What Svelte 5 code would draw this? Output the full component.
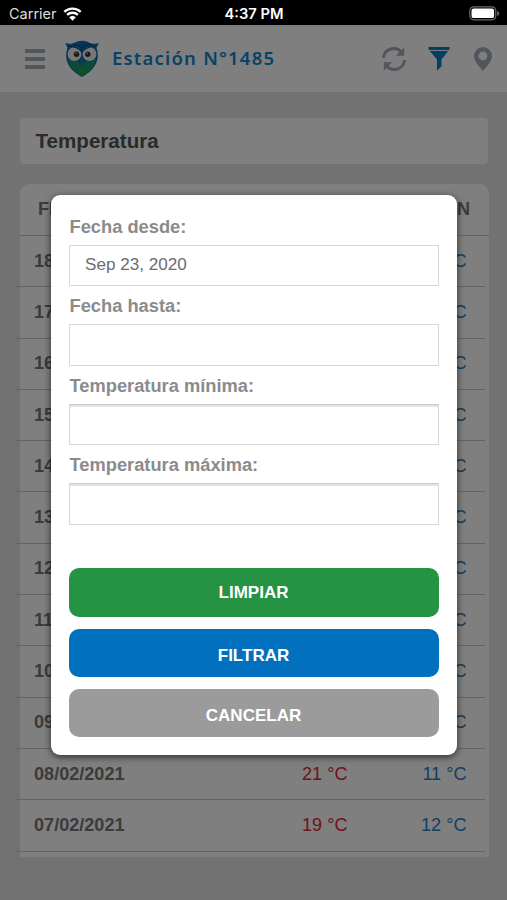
<script lang="ts">
  interface Reading {
    date: string;
    max: number;
    min: number;
  }

  interface Field {
    id: string;
    label: string;
    value: string;
    numeric?: boolean;
  }

  const readings: Reading[] = [
    { date: '18/02/2021', max: 22, min: 12 },
    { date: '17/02/2021', max: 23, min: 12 },
    { date: '16/02/2021', max: 21, min: 11 },
    { date: '15/02/2021', max: 20, min: 10 },
    { date: '14/02/2021', max: 22, min: 11 },
    { date: '13/02/2021', max: 21, min: 12 },
    { date: '12/02/2021', max: 19, min: 10 },
    { date: '11/02/2021', max: 20, min: 11 },
    { date: '10/02/2021', max: 22, min: 12 },
    { date: '09/02/2021', max: 21, min: 11 },
    { date: '08/02/2021', max: 21, min: 11 },
    { date: '07/02/2021', max: 19, min: 12 }
  ];

  let fields: Field[] = $state([
    { id: 'desde', label: 'Fecha desde:', value: 'Sep 23, 2020' },
    { id: 'hasta', label: 'Fecha hasta:', value: '' },
    { id: 'minima', label: 'Temperatura mínima:', value: '', numeric: true },
    { id: 'maxima', label: 'Temperatura máxima:', value: '', numeric: true }
  ]);

  function clear() {
    for (const f of fields) f.value = '';
  }
</script>

<div class="screen">
  <div class="status">
    <div class="carrier">
      <span>Carrier</span>
      <svg width="19" height="14" viewBox="0 0 19 14" aria-hidden="true">
        <path d="M1.3 4.9a11.8 11.8 0 0 1 16.4 0M4.1 7.9a7.8 7.8 0 0 1 10.8 0" fill="none" stroke="#fff" stroke-width="2.3" />
        <path d="M6.2 10.2a4.8 4.8 0 0 1 6.6 0L9.5 13.7z" fill="#fff" />
      </svg>
    </div>
    <span class="time">4:37 PM</span>
    <svg class="battery" width="31" height="15" viewBox="0 0 31 15" aria-hidden="true">
      <rect x="0.8" y="0.8" width="26" height="13" rx="4" fill="none" stroke="#6c6c6c" stroke-width="1.2" />
      <rect x="2.5" y="2.5" width="22.6" height="9.6" rx="2.2" fill="#fff" />
      <path d="M28.3 5v5c2.4-.8 2.4-4.2 0-5z" fill="#777" />
    </svg>
  </div>

  <div class="page">
    <header>
      <svg class="menu" width="22" height="22" viewBox="0 0 22 22" aria-hidden="true">
        <path d="M1 3h20M1 11h20M1 19h20" stroke="#a3abb8" stroke-width="4" />
      </svg>
      <svg class="owl" width="36" height="38" viewBox="0 0 36 38" aria-hidden="true">
        <path d="M1 3c5 1.4 7.300.8 11-1 4-1.700 8-1.700 12 0 3.700 1.800 6 2.400 11 1l-2.600 4.500C36 18 33 29 18 37 3 29 0 18 3.600 7.500z" fill="#0b70b0" />
        <path d="M4 19c8 0 12 3 14 9 2-6 6-9 14-9-1.500 7.500-6.500 13-14 17.300C10.500 32 5.500 26.500 4 19z" fill="#10967c" />
        <path d="M18 33C11 31 7 27 6.400 21.500M18 33c7-2 11-6 11.600-11.500M18 19v17M18 32l-7-7M18 32l7-7" fill="none" stroke="#2e9c45" stroke-width="1.400" />
        <circle cx="10.500" cy="14" r="6.900" fill="#eee" />
        <circle cx="25.500" cy="14" r="6.900" fill="#eee" />
        <circle cx="12.500" cy="14.300" r="2.700" fill="#333" />
        <circle cx="23.800" cy="14.300" r="2.700" fill="#333" />
        <circle cx="12" cy="13.300" r="0.800" fill="#ddd" />
        <circle cx="23" cy="13.300" r="0.800" fill="#ddd" />
        <path d="M16.200 17.500h3.600L18 23z" fill="#0875b8" />
        <path d="M3 6.500C9 6 14 7.500 18 12c4-4.500 9-6 15-5.500M9 4.500c4 0 6.500 1 9 3.500 2.500-2.500 5-3.500 9-3.500" fill="none" stroke="#064c80" stroke-width="1.100" />
      </svg>
      <h1>Estación N°1485</h1>
      <div class="actions">
        <svg width="26" height="26" viewBox="0 0 26 26" aria-hidden="true">
          <path d="M2.500 12A10.300 10.300 0 0 1 20.500 6M23.500 14A10.300 10.300 0 0 1 5.500 20" fill="none" stroke="#a3abb8" stroke-width="3" />
          <path d="M23.200 1.500v8.200h-8.400zM2.800 24.500v-8.200h8.400z" fill="#a3abb8" />
        </svg>
        <svg width="22" height="26" viewBox="0 0 22 26" aria-hidden="true">
          <path d="M.5 1h21v2.200L21 4H1L.5 3.200zM1.800 5h18.400l-6.700 8.500v6.800L9 24.700V13.500z" fill="#097cc0" />
        </svg>
        <svg width="20" height="26" viewBox="0 0 20 26" aria-hidden="true">
          <path fill-rule="evenodd" d="M10 1a9 9 0 0 0-9 9c0 5 4.500 9.500 9 15 4.500-5.500 9-10 9-15a9 9 0 0 0-9-9zm0 4.600a4.400 4.400 0 1 1 0 8.800 4.400 4.400 0 0 1 0-8.800z" fill="#a3abb8" />
        </svg>
      </div>
    </header>

    <h2>Temperatura</h2>

    <section class="table">
      <div class="row head">
        <span>FECHA</span>
        <span class="num">MAX</span>
        <span class="num">MIN</span>
      </div>
      {#each readings as r (r.date)}
        <div class="row">
          <span class="date">{r.date}</span>
          <span class="num max">{r.max} °C</span>
          <span class="num min">{r.min} °C</span>
        </div>
      {/each}
    </section>
  </div>

  <div class="overlay">
    <form class="modal" onsubmit={(e) => e.preventDefault()}>
      {#each fields as f (f.id)}
        <label for={f.id}>{f.label}</label>
        <input id={f.id} type="text" class:numeric={f.numeric} bind:value={f.value} />
      {/each}
      <div class="buttons">
        <button type="button" class="clear" onclick={clear}>LIMPIAR</button>
        <button type="submit" class="filter">FILTRAR</button>
        <button type="button" class="cancel">CANCELAR</button>
      </div>
    </form>
  </div>
</div>

<style>
  :global(body) {
    margin: 0;
  }
  .screen {
    position: relative;
    display: flex;
    flex-direction: column;
    width: 507px;
    height: 900px;
    overflow: hidden;
    font-family: 'Liberation Sans', Arial, sans-serif;
    box-sizing: border-box;
  }
  .status {
    display: grid;
    grid-template-columns: 1fr auto 1fr;
    align-items: center;
    height: 25px;
    padding: 2px 7px 0 9px;
    box-sizing: border-box;
    background: #000;
    color: #fff;
    font-family: Inter, sans-serif;
    font-size: 14.5px;
  }
  .carrier {
    display: flex;
    align-items: center;
    gap: 6px;
    color: #ddd;
  }
  .time {
    font-weight: 600;
    font-size: 14.7px;
    transform: translateX(-0.5px);
  }
  .battery {
    justify-self: end;
  }
  .page {
    flex: 1;
    background: #e5e5e5;
  }
  header {
    display: flex;
    align-items: center;
    height: 67px;
    padding: 0 14px 0 24px;
    box-sizing: border-box;
    background: #fff;
  }
  .owl {
    margin-left: 18px;
  }
  h1 {
    margin: -2px 0 0 12px;
    color: #0b86ce;
    font-family: 'Noto Sans', sans-serif;
    font-size: 18.5px;
    font-weight: 600;
    letter-spacing: 1.2px;
    white-space: nowrap;
  }
  .actions {
    display: flex;
    align-items: center;
    gap: 22px;
    margin-left: auto;
  }
  .actions svg:nth-child(2) {
    margin-left: -1px;
    margin-right: 1px;
  }
  h2 {
    height: 46px;
    margin: 26px 19px 20px 20px;
    padding-left: 15.5px;
    border-radius: 4px;
    background: #fff;
    color: #555;
    font-size: 20.6px;
    line-height: 46px;
  }
  .table {
    height: 673px;
    margin: 0 18.5px 0 19.5px;
    border-radius: 9px 9px 0 0;
    background: #fff;
  }
  .row {
    display: grid;
    grid-template-columns: 1fr 120px 119px;
    align-items: center;
    height: 51.3px;
    margin: 0 3.5px 0 -3.5px;
    padding: 0 18.5px 0 18px;
    border-bottom: 1px solid #c6c6c6;
    box-sizing: border-box;
    color: #777;
    font-size: 18.1px;
  }
  .row.head {
    height: 52px;
    margin: 0;
    padding: 0 18.5px;
    font-weight: bold;
  }
  .date {
    font-weight: bold;
  }
  .num {
    text-align: right;
  }
  .max {
    color: #e52330;
  }
  .min {
    color: #287fbd;
  }
  .overlay {
    position: absolute;
    inset: 25px 0 0;
    display: flex;
    align-items: flex-start;
    justify-content: center;
    background: rgba(0, 0, 0, 0.5);
  }
  .modal {
    display: flex;
    flex-direction: column;
    width: 406px;
    height: 560.5px;
    margin-top: 169.5px;
    padding: 19px 18px 18px;
    border-radius: 9px;
    box-sizing: border-box;
    background: #fff;
    box-shadow: 0 2px 7px rgba(0, 0, 0, 0.65);
  }
  label {
    height: 31px;
    padding-left: 1px;
    color: #8b8b8b;
    font-size: 18.3px;
    font-weight: bold;
    line-height: 25px;
  }
  input {
    height: 41.5px;
    margin: 0 0 7px;
    padding: 0 15.5px;
    border: 1.500px solid #d8d8d8;
    border-radius: 0;
    box-sizing: border-box;
    background: #fff;
    color: #6d6d6d;
    font-family: inherit;
    font-size: 17.1px;
  }
  .numeric {
    box-shadow: inset 0 2px 1px #e2e2e2;
    border-top-color: #cacaca;
  }
  .buttons {
    display: flex;
    flex-direction: column;
    gap: 12px;
    margin-top: auto;
  }
  button {
    height: 48px;
    padding: 5px 0 0;
    border: 0;
    border-radius: 10px;
    color: #fff;
    font-family: inherit;
    font-size: 17px;
    font-weight: bold;
  }
  .clear {
    height: 49px;
    padding-top: 0;
    background: #269244;
  }
  .filter {
    background: #0070bf;
  }
  .cancel {
    background: #9b9b9b;
  }
</style>
